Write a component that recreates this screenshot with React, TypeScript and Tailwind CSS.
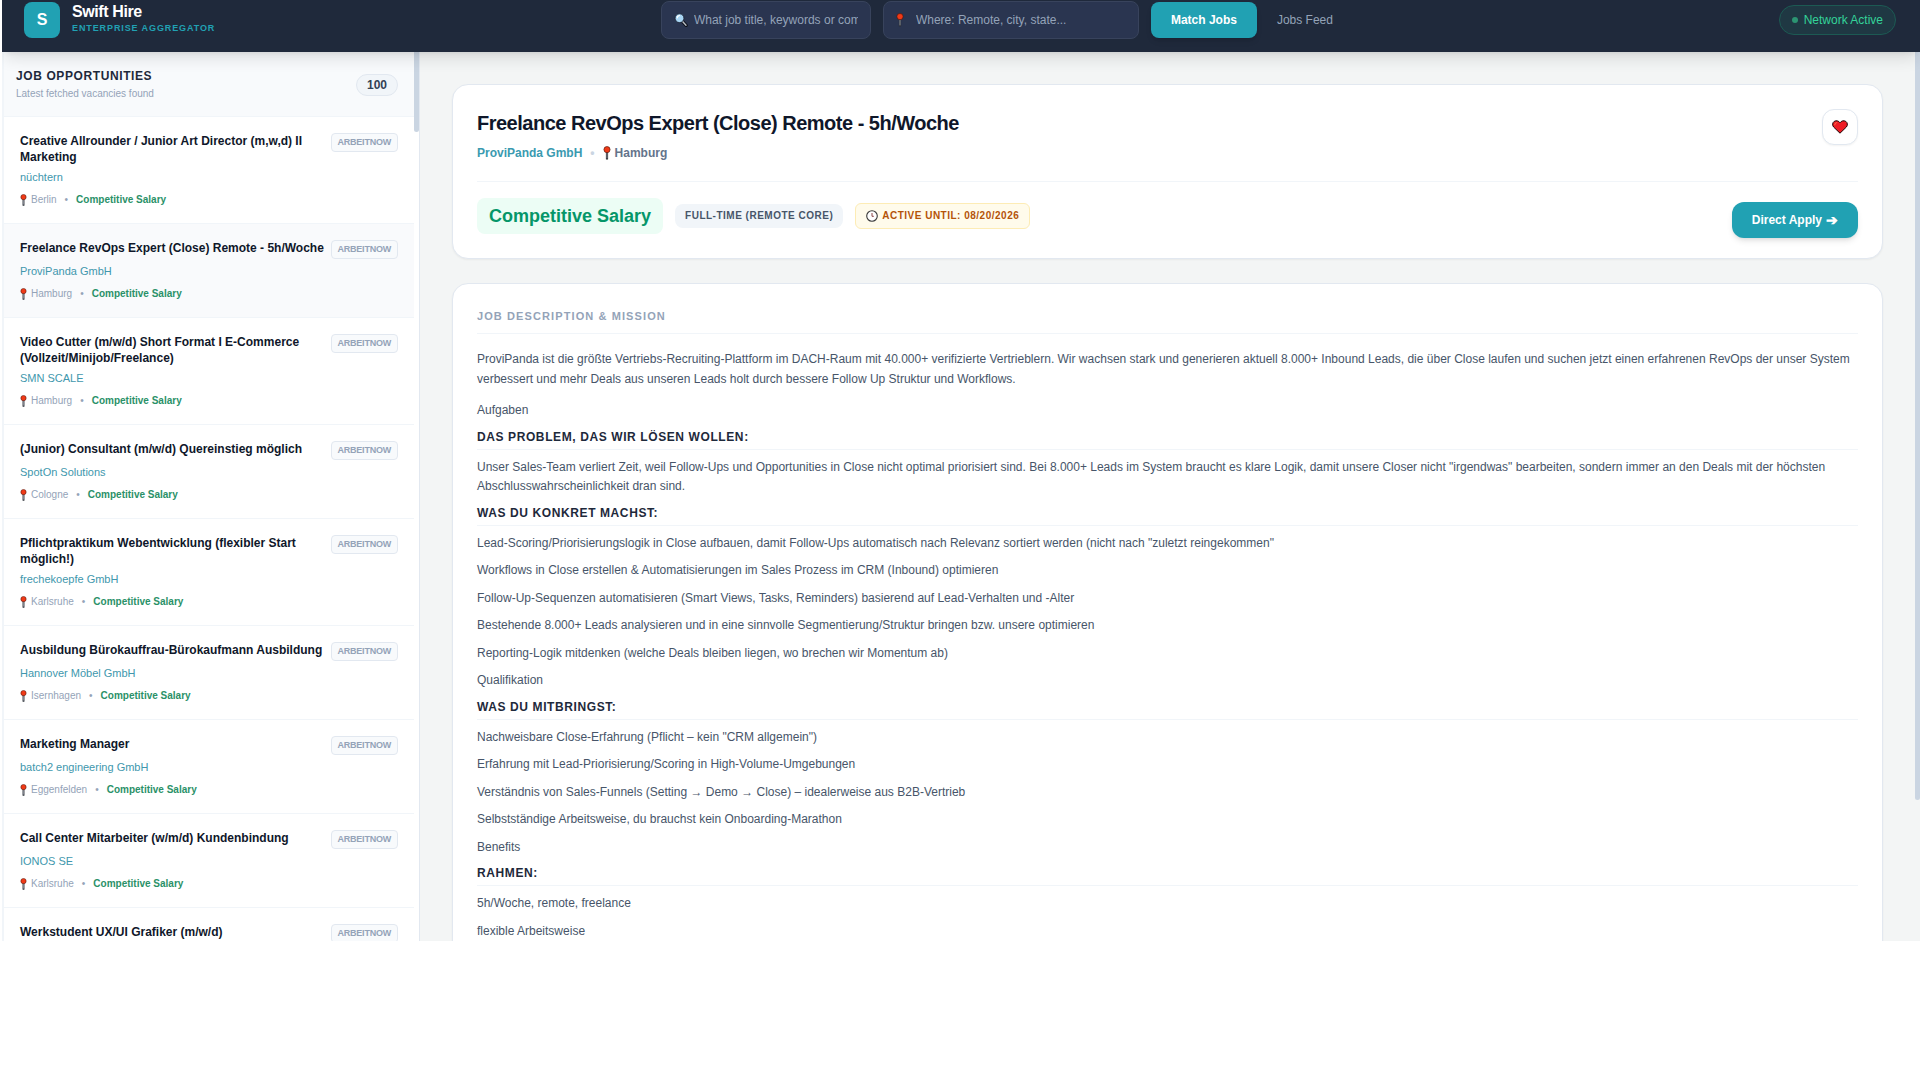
import React from "react";

type Job = { title: string; company?: string; city?: string; active?: boolean };

const jobs: Job[] = [
  { title: "Creative Allrounder / Junior Art Director (m,w,d) II Marketing", company: "nüchtern", city: "Berlin" },
  { title: "Freelance RevOps Expert (Close) Remote - 5h/Woche", company: "ProviPanda GmbH", city: "Hamburg", active: true },
  { title: "Video Cutter (m/w/d) Short Format I E-Commerce (Vollzeit/Minijob/Freelance)", company: "SMN SCALE", city: "Hamburg" },
  { title: "(Junior) Consultant (m/w/d) Quereinstieg möglich", company: "SpotOn Solutions", city: "Cologne" },
  { title: "Pflichtpraktikum Webentwicklung (flexibler Start möglich!)", company: "frechekoepfe GmbH", city: "Karlsruhe" },
  { title: "Ausbildung Bürokauffrau-Bürokaufmann Ausbildung", company: "Hannover Möbel GmbH", city: "Isernhagen" },
  { title: "Marketing Manager", company: "batch2 engineering GmbH", city: "Eggenfelden" },
  { title: "Call Center Mitarbeiter (w/m/d) Kundenbindung", company: "IONOS SE", city: "Karlsruhe" },
  { title: "Werkstudent UX/UI Grafiker (m/w/d)" },
];

const sections: { heading: string; lines: string[] }[] = [
  {
    heading: "Das Problem, das wir lösen wollen:",
    lines: [
      'Unser Sales-Team verliert Zeit, weil Follow-Ups und Opportunities in Close nicht optimal priorisiert sind. Bei 8.000+ Leads im System braucht es klare Logik, damit unsere Closer nicht "irgendwas" bearbeiten, sondern immer an den Deals mit der höchsten Abschlusswahrscheinlichkeit dran sind.',
    ],
  },
  {
    heading: "Was du konkret machst:",
    lines: [
      'Lead-Scoring/Priorisierungslogik in Close aufbauen, damit Follow-Ups automatisch nach Relevanz sortiert werden (nicht nach "zuletzt reingekommen"',
      "Workflows in Close erstellen & Automatisierungen im Sales Prozess im CRM (Inbound) optimieren",
      "Follow-Up-Sequenzen automatisieren (Smart Views, Tasks, Reminders) basierend auf Lead-Verhalten und -Alter",
      "Bestehende 8.000+ Leads analysieren und in eine sinnvolle Segmentierung/Struktur bringen bzw. unsere optimieren",
      "Reporting-Logik mitdenken (welche Deals bleiben liegen, wo brechen wir Momentum ab)",
      "Qualifikation",
    ],
  },
  {
    heading: "Was du mitbringst:",
    lines: [
      'Nachweisbare Close-Erfahrung (Pflicht – kein "CRM allgemein")',
      "Erfahrung mit Lead-Priorisierung/Scoring in High-Volume-Umgebungen",
      "Verständnis von Sales-Funnels (Setting → Demo → Close) – idealerweise aus B2B-Vertrieb",
      "Selbstständige Arbeitsweise, du brauchst kein Onboarding-Marathon",
      "Benefits",
    ],
  },
  { heading: "Rahmen:", lines: ["5h/Woche, remote, freelance", "flexible Arbeitsweise"] },
];

function Pin({ className }: { className: string }) {
  return (
    <svg viewBox="0 0 8 14" className={className} aria-hidden="true">
      <rect x="2.9" y="5" width="2.2" height="8.6" rx="0.6" fill="#2b2f36" />
      <rect x="3.6" y="6.4" width="0.8" height="6" fill="#a3a9b2" />
      <circle cx="4" cy="3.6" r="3.1" fill="#f03a17" stroke="#4a1209" strokeWidth="0.6" />
    </svg>
  );
}

function Magnifier() {
  return (
    <svg viewBox="0 0 14 14" className="size-3.5 shrink-0" aria-hidden="true">
      <path d="M8.6 8.6 L12.2 12.4" stroke="#0b0f17" strokeWidth="3.2" strokeLinecap="round" />
      <path d="M8.6 8.6 L12 12.2" stroke="#b9bec6" strokeWidth="1.4" strokeLinecap="round" />
      <circle cx="5.5" cy="5.2" r="4.4" fill="#a9d6f5" stroke="#16202e" strokeWidth="0.8" />
      <path d="M3.2 4.8 A2.4 2.4 0 0 1 5.4 2.6" stroke="#fff" strokeWidth="1.2" fill="none" strokeLinecap="round" />
    </svg>
  );
}

function Heart() {
  return (
    <svg viewBox="0 0 16 14" className="h-3.5 w-4" aria-hidden="true">
      <path
        d="M8 13.2 L1.6 7 C0.1 5.3 0.4 2.6 2.2 1.4 C4.1 0.2 6.7 0.7 8 2.8 C9.3 0.7 11.9 0.2 13.8 1.4 C15.6 2.6 15.9 5.3 14.4 7 Z"
        fill="#ee1c25"
        stroke="#1a0505"
        strokeWidth="1"
        strokeLinejoin="round"
      />
      <path d="M2.8 4.8 C2.8 3.3 3.8 2.6 4.8 2.6" stroke="#ff7a4d" strokeWidth="0.9" fill="none" strokeLinecap="round" />
    </svg>
  );
}

function Clock() {
  return (
    <svg viewBox="0 0 12 12" className="size-3 shrink-0" aria-hidden="true">
      <circle cx="6" cy="6" r="5.3" fill="#fff" stroke="#3b3b3b" strokeWidth="1.1" />
      <path d="M6 3 V6.3 H7.8" fill="none" stroke="#8a4545" strokeWidth="1" />
    </svg>
  );
}

function Header() {
  return (
    <header className="relative z-10 flex items-start justify-between bg-[#1f293b] pr-6 pb-3 pl-[22px] shadow-lg">
      <div className="flex h-10 items-center gap-3">
        <div className="flex size-9 items-center justify-center rounded-lg bg-[#21a1b3] text-base font-black text-white">S</div>
        <div className="pb-1">
          <div className="text-base leading-5 font-bold tracking-tight text-white">Swift Hire</div>
          <div className="text-[9px] leading-3 font-bold tracking-widest text-[#21a1b3] uppercase">Enterprise Aggregator</div>
        </div>
      </div>
      <div className="flex h-10 items-center gap-3 text-xs">
        <label className="flex h-[38px] w-[210px] items-center gap-1.5 rounded-lg border border-[#38435c] bg-[#2a3550] px-3">
          <Magnifier />
          <input aria-label="Job title" placeholder="What job title, keywords or company" className="min-w-0 flex-1 text-white outline-none placeholder:text-[#94a3b8]" />
        </label>
        <label className="flex h-[38px] w-64 items-center gap-1.5 rounded-lg border border-[#38435c] bg-[#2a3550] px-3">
          <span className="flex w-3.5 justify-center pr-1.5">
            <Pin className="h-3.5 w-2 shrink-0" />
          </span>
          <input aria-label="Location" placeholder="Where: Remote, city, state..." className="min-w-0 flex-1 text-white outline-none placeholder:text-[#94a3b8]" />
        </label>
        <button className="h-9 rounded-lg bg-[#21a1b3] px-5 font-bold text-white shadow-md">Match Jobs</button>
        <a href="#feed" className="pl-2 text-[#94a3b8]">Jobs Feed</a>
      </div>
      <div className="flex h-10 items-center">
        <div className="flex h-[30px] items-center gap-1.5 rounded-full border border-[#1c5a53] bg-[#1f3843] px-3 text-xs text-[#34d399]">
          <span className="size-1.5 rounded-full bg-[#2c9472]" />
          Network Active
        </div>
      </div>
    </header>
  );
}

function JobItem({ job }: { job: Job }) {
  return (
    <li className={job.active ? "border-b border-slate-100 bg-[#f9fafc] p-4" : "border-b border-slate-100 bg-white p-4"}>
      <div className="flex items-start justify-between gap-1.5">
        <h3 className="text-xs leading-4 font-bold text-[#0f172a]">{job.title}</h3>
        <span className="flex h-[19px] shrink-0 items-center rounded border border-slate-200 bg-slate-50 px-1.5 text-[9px] font-bold tracking-tight text-[#94a3b8] uppercase">
          Arbeitnow
        </span>
      </div>
      {job.company && <p className="mt-1 text-[11px] leading-4 text-[#4197ad]">{job.company}</p>}
      {job.city && (
        <div className="mt-2 flex items-center text-[10px] leading-[14px] text-[#94a3b8]">
          <Pin className="mr-1 h-3 w-[7px]" />
          <span>{job.city}</span>
          <span className="mx-2">•</span>
          <span className="font-bold text-[#2a9168]">Competitive Salary</span>
        </div>
      )}
    </li>
  );
}

function Sidebar() {
  return (
    <aside className="flex w-[418px] shrink-0 border-r border-slate-200 bg-white">
      <div className="min-w-0 flex-1 overflow-hidden border-l-2 border-slate-100">
        <div className="flex h-[65px] items-start justify-between border-b border-slate-100 bg-slate-50 pt-4 pr-4 pl-3">
          <div>
            <h2 className="text-xs leading-4 font-bold tracking-wider text-[#1e293b] uppercase">Job Opportunities</h2>
            <p className="mt-0.5 text-[10px] leading-4 text-[#94a3b8]">Latest fetched vacancies found</p>
          </div>
          <span className="mt-1.5 rounded-full border border-slate-200 bg-slate-100 px-2.5 text-xs leading-5 font-bold text-[#334155]">100</span>
        </div>
        <ul>
          {jobs.map((job) => (
            <JobItem key={job.title} job={job} />
          ))}
        </ul>
      </div>
      <div className="h-20 w-[5px] rounded-b-full bg-slate-300" />
    </aside>
  );
}

function Summary() {
  return (
    <section className="rounded-2xl border border-slate-200 bg-white px-6 pt-6 pb-5 shadow-xs">
      <div className="flex items-start justify-between border-b border-slate-100 pb-5">
        <div>
          <h1 className="text-xl leading-7 font-bold tracking-tight text-[#0f172a]">Freelance RevOps Expert (Close) Remote - 5h/Woche</h1>
          <div className="mt-2 flex items-center text-xs leading-4 font-bold text-[#64748b]">
            <span className="text-[#3a9ab0]">ProviPanda GmbH</span>
            <span className="mx-2 text-slate-300">•</span>
            <Pin className="mr-1 h-3.5 w-2" />
            <span>Hamburg</span>
          </div>
        </div>
        <button aria-label="Save job" className="flex size-9 items-center justify-center rounded-xl border border-slate-200 bg-white shadow-xs">
          <Heart />
        </button>
      </div>
      <div className="flex items-start justify-between pt-4">
        <div className="flex items-center gap-3">
          <span className="rounded-lg bg-[#ecfdf5] px-3 py-1 text-lg leading-7 font-bold text-[#059669]">Competitive Salary</span>
          <span className="rounded-lg bg-slate-100 px-2.5 py-1 text-[10px] leading-4 font-bold tracking-wider text-[#475569] uppercase">
            Full-time (Remote Core)
          </span>
          <span className="flex items-center gap-1 rounded-md border border-[#fdecb5] bg-[#fffbeb] px-2.5 py-1 text-[10px] leading-4 font-bold tracking-wider text-[#b45309] uppercase">
            <Clock />
            Active until: 08/20/2026
          </span>
        </div>
        <button className="mt-1 flex h-9 items-center gap-1 rounded-xl bg-[#21a1b3] px-5 text-xs font-bold text-white shadow-md">
          Direct Apply <span className="text-sm leading-4">➔</span>
        </button>
      </div>
    </section>
  );
}

function Description() {
  return (
    <section className="rounded-2xl border border-slate-200 bg-white p-6 shadow-xs">
      <h2 className="mb-4 border-b border-slate-100 pb-[9px] text-[11px] leading-4 font-bold tracking-widest text-[#94a3b8] uppercase">
        Job Description &amp; Mission
      </h2>
      <div className="text-xs leading-relaxed text-[#475569]">
        <p className="mb-3">
          ProviPanda ist die größte Vertriebs-Recruiting-Plattform im DACH-Raum mit 40.000+ verifizierte Vertrieblern. Wir wachsen stark und
          generieren aktuell 8.000+ Inbound Leads, die über Close laufen und suchen jetzt einen erfahrenen RevOps der unser System verbessert
          und mehr Deals aus unseren Leads holt durch bessere Follow Up Struktur und Workflows.
        </p>
        <p className="mb-2">Aufgaben</p>
        {sections.map((s) => (
          <React.Fragment key={s.heading}>
            <h3 className="mb-2 border-b border-slate-100 pb-1 text-xs leading-4 font-bold tracking-wider text-[#1e293b] uppercase">{s.heading}</h3>
            {s.lines.map((l) => (
              <p key={l} className="mb-2">{l}</p>
            ))}
          </React.Fragment>
        ))}
      </div>
    </section>
  );
}

export default function App() {
  return (
    <div className="min-h-screen bg-white pl-0.5 font-['Liberation_Sans',Arial,sans-serif]">
      <div className="flex h-[941px] flex-col overflow-hidden">
        <Header />
        <div className="flex min-h-0 flex-1 overflow-hidden">
          <Sidebar />
          <main className="flex min-w-0 flex-1 bg-[#f3f5f5]">
            <div className="flex min-w-0 flex-1 flex-col gap-6 px-8 py-8">
              <Summary />
              <Description />
            </div>
            <div className="h-[748px] w-[5px] rounded-b-full bg-slate-300" />
          </main>
        </div>
      </div>
    </div>
  );
}
